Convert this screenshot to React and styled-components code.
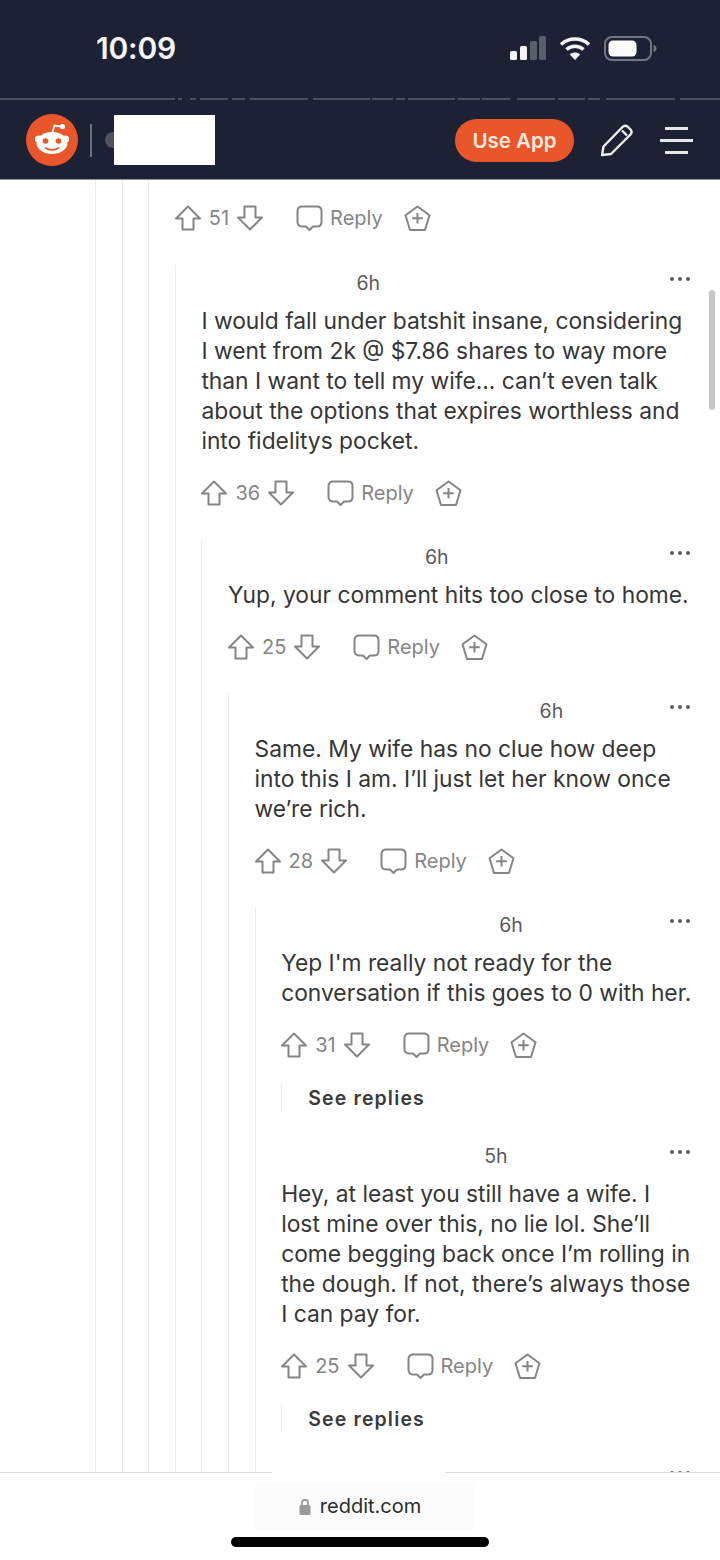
import React from 'react';
import styled, { createGlobalStyle } from 'styled-components';

const NAVY = '#1c2134';
const ORANGE = '#e8562a';
const LINE = '#ededed';
const ICON = '#858585';
const UI_FONT = "Inter, 'Liberation Sans', sans-serif";

const GlobalStyle = createGlobalStyle`
  html, body { margin: 0; padding: 0; background: #ffffff; }
  body { font-family: ${UI_FONT}; }
`;

const ruleGaps = [[175, 178], [182, 190], [196, 200], [228, 232], [245, 250], [308, 313], [370, 372], [393, 396], [405, 408], [455, 458], [480, 482], [510, 517], [555, 558], [585, 588], [600, 606], [675, 680]];
const ruleStops = ruleGaps
  .map(([a, b]) => `#4c505d ${a}px, transparent ${a}px, transparent ${b}px, #4c505d ${b}px`)
  .join(', ');

const Page = styled.div`
  width: 720px;
  height: 1560px;
  display: flex;
  flex-direction: column;
  overflow: hidden;
  background: #ffffff;
`;
const Header = styled.header`
  flex: none;
  height: 180px;
  display: flex;
  flex-direction: column;
  background: ${NAVY};
  box-shadow: inset 0 -1px 0 #8e909a;
`;
const StatusBar = styled.div`
  height: 98px;
  display: flex;
  align-items: center;
  padding: 0 63px 2px 96px;
  box-sizing: border-box;
`;
const Clock = styled.div`
  font-size: 30px;
  font-weight: 600;
  color: #f4f4f6;
  letter-spacing: -0.2px;
`;
const StatusIcons = styled.div`
  margin-left: auto;
  display: flex;
  align-items: center;
  gap: 13px;
`;
const Rule = styled.div`
  height: 2px;
  background: linear-gradient(90deg, ${ruleStops});
`;
const NavBar = styled.nav`
  flex: 1;
  display: flex;
  align-items: center;
  padding: 0 27px 0 26px;
`;
const Divider = styled.span`
  width: 2px;
  height: 33px;
  margin-left: 12px;
  background: #6d7079;
`;
const HandleMark = styled.span`
  width: 9px;
  height: 16px;
  margin-left: 13px;
  border-radius: 8px 0 0 8px;
  background: #50535d;
`;
const RedactBox = styled.div`
  width: 101px;
  height: 50px;
  background: #ffffff;
`;
const UseApp = styled.button`
  margin-left: auto;
  width: 119px;
  height: 43px;
  padding: 0;
  border: 0;
  border-radius: 22px;
  background: ${ORANGE};
  color: #fde9df;
  font-family: ${UI_FONT};
  font-size: 20.5px;
  font-weight: 600;
`;
const Pencil = styled.svg`
  margin-left: 26px;
  flex: none;
`;
const Burger = styled.div`
  margin-left: 27px;
  width: 33px;
  display: flex;
  flex-direction: column;
  align-items: center;
  gap: 9px;
`;
const BurgerBar = styled.span`
  display: block;
  height: 3px;
  width: ${(p) => (p.$wide ? '33px' : '23px')};
  background: #e6e6ea;
`;

const Main = styled.main`
  position: relative;
  flex: 1;
  min-height: 0;
  overflow: hidden;
  padding: 0 27px 0 95px;
`;
const ScrollThumb = styled.div`
  position: absolute;
  top: 110px;
  left: 709px;
  width: 6px;
  height: 120px;
  border-radius: 3px;
  background: #c6c6c6;
`;
const Thread = styled.div`
  border-left: 1px solid ${LINE};
  padding-left: 25.6px;
  padding-top: ${(p) => p.$top || 0}px;
  padding-bottom: ${(p) => p.$fill || 0}px;
  margin-top: ${(p) => p.$gap || 0}px;
`;
const MetaRow = styled.div`
  height: 36px;
  display: flex;
  align-items: center;
  padding-right: 3px;
  margin-bottom: 5px;
`;
const Age = styled.span`
  margin-left: ${(p) => p.$offset}px;
  font-size: 19.5px;
  color: #5a5a5a;
`;
const Dots = styled.div`
  margin-left: auto;
  margin-bottom: 9px;
  display: flex;
  gap: 4px;
`;
const Dot = styled.i`
  width: 4px;
  height: 4px;
  border-radius: 50%;
  background: #5c5c5c;
`;
const Body = styled.p`
  margin: 0 0 22px;
  font-size: 22.8px;
  line-height: 30px;
  color: #363636;
`;
const Actions = styled.div`
  height: 30px;
  display: flex;
  align-items: center;
  color: ${ICON};
  font-size: 20px;
`;
const Count = styled.span`
  margin: 0 8px;
`;
const ReplyLabel = styled.span`
  margin: 0 21px 0 7px;
`;
const BubbleIcon = styled.svg`
  margin-left: 33px;
`;
const SeeReplies = styled.div`
  height: 28px;
  margin: 24px 0 ${(p) => p.$after}px;
  padding-left: 26px;
  border-left: 1px solid ${LINE};
  display: flex;
  align-items: center;
  font-size: 19.5px;
  font-weight: 600;
  letter-spacing: 1.15px;
  color: #3b3b3b;
`;

const Footer = styled.footer`
  position: relative;
  flex: none;
  height: 87px;
  display: flex;
  flex-direction: column;
  align-items: center;
  background: #ffffff;
  box-shadow: 0 -1px 0 #dcdcdc;
`;
const FooterGap = styled.div`
  position: absolute;
  top: -3px;
  left: 272px;
  width: 173px;
  height: 8px;
  background: #ffffff;
`;
const Address = styled.div`
  margin: 9px 0 0 10px;
  padding-right: 10px;
  box-sizing: border-box;
  width: 220px;
  height: 48px;
  display: flex;
  align-items: center;
  justify-content: center;
  gap: 9px;
  background: #fcfcfc;
  font-size: 20px;
  color: #2c2c2c;
`;
const HomeBar = styled.div`
  margin-top: 7px;
  width: 258px;
  height: 10px;
  border-radius: 5px;
  background: #000000;
`;

const Signal = () => (
  <svg width="36" height="24" viewBox="0 0 36 24">
    <rect x="0" y="15" width="7" height="9" rx="1.5" fill="#f4f4f6" />
    <rect x="10" y="10" width="7" height="14" rx="1.5" fill="#f4f4f6" />
    <rect x="20" y="5" width="7" height="19" rx="1.5" fill="#5b5e6a" />
    <rect x="29" y="0" width="7" height="24" rx="1.5" fill="#5b5e6a" />
  </svg>
);

const Wifi = () => (
  <svg width="32" height="24" viewBox="0 0 32 24" fill="none" stroke="#f4f4f6" strokeWidth="3.6">
    <path d="M2 8.5C10 1.2 22 1.2 30 8.5" />
    <path d="M7.5 13.5C12.5 9.2 19.5 9.2 24.5 13.5" />
    <path d="M16 24L10.8 18.4C13.8 16 18.2 16 21.2 18.4Z" fill="#f4f4f6" stroke="none" />
  </svg>
);

const Battery = () => (
  <svg width="53" height="25" viewBox="0 0 53 25" fill="none">
    <rect x="1" y="1" width="46" height="23" rx="7" stroke="#73767f" strokeWidth="2" />
    <rect x="4.5" y="4.5" width="28" height="16" rx="4.5" fill="#fbfbfc" />
    <path d="M49.5 9C51.5 9.6 52.5 11 52.5 12.5C52.5 14 51.5 15.4 49.5 16Z" fill="#73767f" />
  </svg>
);

const Snoo = () => (
  <svg width="52" height="52" viewBox="0 0 52 52">
    <circle cx="26" cy="26" r="26" fill={ORANGE} />
    <path d="M26.5 18L28.5 11.5L35 12.5" fill="none" stroke="#fff" strokeWidth="1.8" />
    <circle cx="36.5" cy="12.5" r="2.6" fill="#fff" />
    <circle cx="12.5" cy="25" r="3.6" fill="#fff" />
    <circle cx="39.5" cy="25" r="3.6" fill="#fff" />
    <ellipse cx="26" cy="29" rx="15.5" ry="11" fill="#fff" />
    <circle cx="19.5" cy="27" r="2.8" fill={ORANGE} />
    <circle cx="32.5" cy="27" r="2.8" fill={ORANGE} />
    <path d="M19.5 34C23 36.5 29 36.5 32.5 34" fill="none" stroke={ORANGE} strokeWidth="1.6" strokeLinecap="round" />
  </svg>
);

const PencilIcon = () => (
  <Pencil width="33" height="33" viewBox="0 0 33 33" fill="none" stroke="#f0f0f3" strokeWidth="2.4" strokeLinejoin="round">
    <path d="M2 31L3.5 22.5L22.5 3C24 1.5 26 1.5 27.5 2.5L30.5 5.5C31.8 7 31.8 9 30.5 10.5L11 30Z" />
    <path d="M22 6.5L27 11.5" />
  </Pencil>
);

const Lock = () => (
  <svg width="12" height="17" viewBox="0 0 12 17">
    <path d="M3 8V4.5C3 0.8 9 0.8 9 4.5V8" fill="none" stroke="#9a9a9a" strokeWidth="1.8" />
    <rect x="0.5" y="7" width="11" height="10" rx="1.5" fill="#9a9a9a" />
  </svg>
);

const UpArrow = () => (
  <svg width="26" height="26" viewBox="0 0 26 26" fill="none" stroke={ICON} strokeWidth="2" strokeLinejoin="round">
    <path d="M13 1.5L25 13.5H18.5V24.5H7.5V13.5H1Z" />
  </svg>
);

const DownArrow = () => (
  <svg width="26" height="26" viewBox="0 0 26 26" fill="none" stroke={ICON} strokeWidth="2" strokeLinejoin="round">
    <path d="M13 24.5L25 12.5H18.5V1.5H7.5V12.5H1Z" />
  </svg>
);

const Bubble = () => (
  <BubbleIcon width="27" height="27" viewBox="0 0 27 27" fill="none" stroke={ICON} strokeWidth="2" strokeLinejoin="round">
    <path d="M6 1.5H21C23.8 1.5 25.5 3.2 25.5 6V17C25.5 19.8 23.8 21.5 21 21.5H17L13.5 25L10 21.5H6C3.2 21.5 1.5 19.8 1.5 17V6C1.5 3.2 3.2 1.5 6 1.5Z" />
  </BubbleIcon>
);

const Award = () => (
  <svg width="27" height="27" viewBox="0 0 27 27" fill="none" stroke={ICON} strokeWidth="2" strokeLinejoin="round">
    <path d="M13.5 1.5L25.5 10.2L21 25H6L1.5 10.2Z" />
    <path d="M13.5 8V18.5M8.2 13.2H18.8" />
  </svg>
);

const ActionRow = ({ votes }) => (
  <Actions>
    <UpArrow />
    <Count>{votes}</Count>
    <DownArrow />
    <Bubble />
    <ReplyLabel>Reply</ReplyLabel>
    <Award />
  </Actions>
);

const Meta = ({ age, offset }) => (
  <MetaRow>
    {age && <Age $offset={offset}>{age}</Age>}
    <Dots>
      <Dot />
      <Dot />
      <Dot />
    </Dots>
  </MetaRow>
);

const Comment = ({ age, offset, votes, children }) => (
  <>
    <Meta age={age} offset={offset} />
    <Body>{children}</Body>
    <ActionRow votes={votes} />
  </>
);

export default function App() {
  return (
    <Page>
      <GlobalStyle />
      <Header>
        <StatusBar>
          <Clock>10:09</Clock>
          <StatusIcons>
            <Signal />
            <Wifi />
            <Battery />
          </StatusIcons>
        </StatusBar>
        <Rule />
        <NavBar>
          <Snoo />
          <Divider />
          <HandleMark />
          <RedactBox />
          <UseApp>Use App</UseApp>
          <PencilIcon />
          <Burger>
            <BurgerBar />
            <BurgerBar $wide />
            <BurgerBar />
          </Burger>
        </NavBar>
      </Header>
      <Main>
        <ScrollThumb />
        <Thread>
          <Thread>
            <Thread $top={23}>
              <ActionRow votes={51} />
              <Thread $gap={32}>
                <Comment age="6h" offset={155} votes={36}>
                  I would fall under batshit insane, considering I went from 2k @ $7.86 shares to way more than I want to tell my wife... can’t even talk about the options that expires worthless and into fidelitys pocket.
                </Comment>
                <Thread $gap={31}>
                  <Comment age="6h" offset={197} votes={25}>
                    Yup, your comment hits too close to home.
                  </Comment>
                  <Thread $gap={31}>
                    <Comment age="6h" offset={285} votes={28}>
                      Same. My wife has no clue how deep into this I am. I’ll just let her know once we’re rich.
                    </Comment>
                    <Thread $gap={31} $fill={200}>
                      <Comment age="6h" offset={218} votes={31}>
                        Yep I'm really not ready for the conversation if this goes to 0 with her.
                      </Comment>
                      <SeeReplies $after={26}>See replies</SeeReplies>
                      <Comment age="5h" offset={203} votes={25}>
                        Hey, at least you still have a wife. I lost mine over this, no lie lol. She’ll come begging back once I’m rolling in the dough. If not, there’s always those I can pay for.
                      </Comment>
                      <SeeReplies $after={26}>See replies</SeeReplies>
                      <Meta age="" offset={0} />
                    </Thread>
                  </Thread>
                </Thread>
              </Thread>
            </Thread>
          </Thread>
        </Thread>
      </Main>
      <Footer>
        <FooterGap />
        <Address>
          <Lock />
          reddit.com
        </Address>
        <HomeBar />
      </Footer>
    </Page>
  );
}
